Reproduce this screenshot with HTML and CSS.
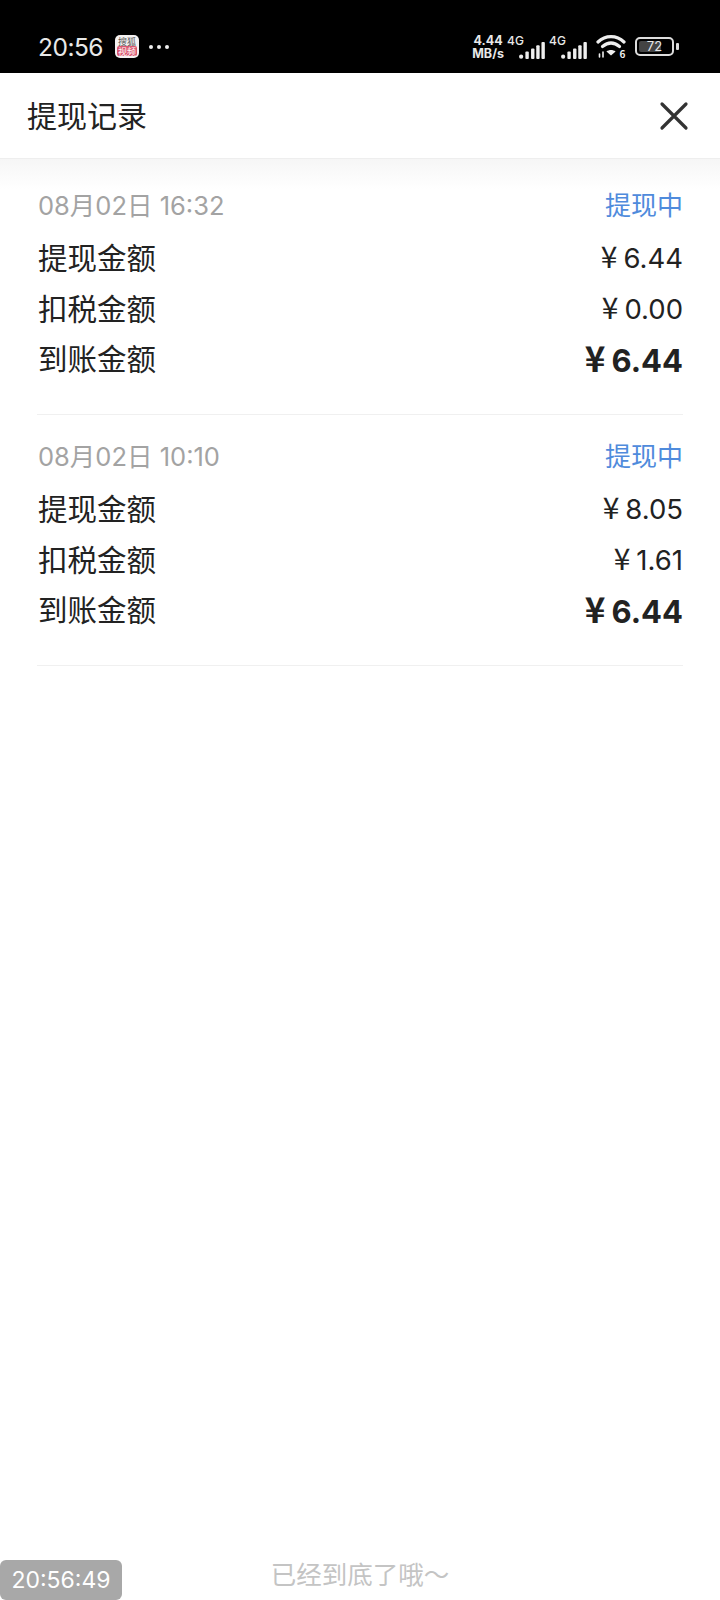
FILE: index.html
```html
<!DOCTYPE html>
<html lang="zh-CN">
<head>
    <meta charset="UTF-8">
    <meta name="viewport" content="width=device-width, initial-scale=1.0">
    <title>提现记录</title>
    <link rel="stylesheet" href="styles.css">
</head>
<body>

    <div class="page">
        <div class="status-bar">
            <div class="status-left">
                <span class="clock">20:56</span>
                <svg class="app-icon" width="24" height="23" viewBox="0 0 24 23">
                    <rect width="24" height="23" rx="5" fill="#f4f1f1"/>
                    <text x="12" y="9.5" font-size="9" text-anchor="middle" fill="#555" class="icon-text">搜狐</text>
                    <rect x="2" y="11" width="20" height="10" rx="2" fill="#d9566f"/>
                    <text x="12" y="19.5" font-size="9" text-anchor="middle" fill="#fff" class="icon-text">视频</text>
                </svg>
                <span class="more-dots"><i></i><i></i><i></i></span>
            </div>
            <div class="status-right">
                <div class="speed"><span>4.44</span><span>MB/s</span></div>
                <div class="signal">
                    <span class="net">4G</span>
                    <svg width="28" height="17" viewBox="0 0 28 18" fill="#eee">
                        <circle cx="2.5" cy="15.5" r="2.2"/>
                        <rect x="7" y="10" width="3.6" height="8" rx="1"/>
                        <rect x="13" y="7" width="3.6" height="11" rx="1"/>
                        <rect x="18.5" y="3.5" width="3.6" height="14.5" rx="1"/>
                        <rect x="24" y="0" width="3.6" height="18" rx="1"/>
                    </svg>
                </div>
                <div class="signal">
                    <span class="net">4G</span>
                    <svg width="28" height="17" viewBox="0 0 28 18" fill="#eee">
                        <circle cx="2.5" cy="15.5" r="2.2"/>
                        <rect x="7" y="10" width="3.6" height="8" rx="1"/>
                        <rect x="13" y="7" width="3.6" height="11" rx="1"/>
                        <rect x="18.5" y="3.5" width="3.6" height="14.5" rx="1"/>
                        <rect x="24" y="0" width="3.6" height="18" rx="1"/>
                    </svg>
                </div>
                <svg class="wifi" width="31" height="26" viewBox="0 0 31 26" fill="none" stroke="#eee" stroke-width="3.2" stroke-linecap="round">
                    <path d="M2 8C9.5 .8 20.5 .8 28 8"/>
                    <path d="M6.5 12.5C12 8 18 8 23.5 12.5"/>
                    <path d="M15 21.5l-4.6-4c2.8-2 6.4-2 9.2 0z" fill="#eee" stroke="none"/>
                    <path d="M3.5 20v3M7 18v5" stroke-width="1.6"/>
                    <text x="23.5" y="24" font-size="10" font-weight="700" fill="#eee" stroke="none" class="icon-text">6</text>
                </svg>
                <div class="battery">
                    <div class="battery-body">
                        <div class="battery-fill"></div>
                        <span class="battery-num">72</span>
                    </div>
                    <div class="battery-cap"></div>
                </div>
            </div>
        </div>

        <div class="header">
            <div class="header-title">提现记录</div>
            <svg class="close-icon" width="30" height="30" viewBox="0 0 30 30" fill="none" stroke="#333" stroke-width="3.2" stroke-linecap="round">
                <path d="M3 3L27 27M27 3L3 27"/>
            </svg>
        </div>
        <div class="header-fade"></div>

        <div class="record-list">
            <div class="record">
                <div class="record-top">
                    <span class="record-date">08月02日 16:32</span>
                    <span class="record-status">提现中</span>
                </div>
                <div class="record-row"><span>提现金额</span><span class="amount">¥<em>6.44</em></span></div>
                <div class="record-row"><span>扣税金额</span><span class="amount">¥<em>0.00</em></span></div>
                <div class="record-row"><span>到账金额</span><span class="amount total">¥<em>6.44</em></span></div>
            </div>
            <div class="record">
                <div class="record-top">
                    <span class="record-date">08月02日 10:10</span>
                    <span class="record-status">提现中</span>
                </div>
                <div class="record-row"><span>提现金额</span><span class="amount">¥<em>8.05</em></span></div>
                <div class="record-row"><span>扣税金额</span><span class="amount">¥<em>1.61</em></span></div>
                <div class="record-row"><span>到账金额</span><span class="amount total">¥<em>6.44</em></span></div>
            </div>
        </div>

        <div class="list-end">已经到底了哦～</div>
        <div class="time-badge">20:56:49</div>
    </div>

</body>
</html>
```

FILE: styles.css
```css
* {
    box-sizing: border-box;
}
body {
    margin: 0;
    font-family: Inter, "Noto Sans CJK SC", sans-serif;
    background-color: #fff;
}
.page {
    position: relative;
    display: flex;
    flex-direction: column;
    height: 1600px;
    overflow: hidden;
}
.icon-text {
    font-family: "Noto Sans CJK SC", sans-serif;
}

/* status bar */
.status-bar {
    display: flex;
    justify-content: space-between;
    align-items: center;
    height: 73px;
    padding: 20px 41px 0 38px;
    background-color: #000;
    color: #e8e8e8;
}
.status-left {
    display: flex;
    align-items: center;
}
.clock {
    font-size: 24.5px;
    letter-spacing: -0.5px;
}
.app-icon {
    margin-left: 12px;
}
.more-dots {
    display: flex;
    gap: 4px;
    margin-left: 10px;
}
.more-dots i {
    width: 4px;
    height: 4px;
    border-radius: 50%;
    background-color: #eee;
}
.status-right {
    display: flex;
    align-items: center;
}
.speed {
    display: flex;
    flex-direction: column;
    align-items: center;
    font-size: 12.5px;
    font-weight: 700;
    line-height: 13px;
}
.signal {
    position: relative;
    display: flex;
    align-items: flex-end;
    justify-content: flex-end;
    width: 42px;
    height: 25px;
}
.net {
    position: absolute;
    left: 3px;
    top: 0;
    font-size: 12px;
    font-weight: 500;
    line-height: 13px;
}
.wifi {
    margin-left: 8px;
}
.battery {
    display: flex;
    align-items: center;
    margin-left: 8px;
}
.battery-body {
    position: relative;
    width: 39px;
    height: 19px;
    border: 2px solid #ddd;
    border-radius: 5px;
    padding: 2px;
}
.battery-fill {
    width: 72%;
    height: 100%;
    border-radius: 2px;
    background-color: #444;
}
.battery-num {
    position: absolute;
    inset: 0;
    text-align: center;
    font-size: 13px;
    line-height: 15px;
}
.battery-cap {
    width: 3px;
    height: 7px;
    margin-left: 2px;
    border-radius: 1px;
    background-color: #ddd;
}

/* header */
.header {
    display: flex;
    justify-content: space-between;
    align-items: center;
    height: 86px;
    padding: 0 31px 0 27px;
    border-bottom: 1px solid #eee;
}
.header-title {
    font-size: 30px;
    color: #222;
    margin-top: -4px;
}
.header-fade {
    height: 30px;
    margin-bottom: -30px;
    background: linear-gradient(#f6f6f6, #fff);
}

/* records */
.record-list {
    padding: 5px 37px 0;
}
.record {
    height: 251px;
    padding-top: 17px;
    border-bottom: 1px solid #f0f0f0;
}
.record-top {
    display: flex;
    justify-content: space-between;
    align-items: center;
    height: 44px;
    margin-bottom: 6px;
    padding-left: 1px;
    font-size: 25.5px;
}
.record-date {
    color: #a3a3a3;
}
.record-status {
    color: #4f8bdc;
    font-size: 26px;
}
.record-row {
    display: flex;
    justify-content: space-between;
    align-items: center;
    height: 50.5px;
    padding-left: 1px;
    font-size: 29.5px;
    color: #222;
}
.amount {
    margin-top: -2px;
    font-family: "Noto Sans CJK SC", sans-serif;
    font-size: 30px;
}
.amount em {
    font-family: Inter, sans-serif;
    font-style: normal;
    font-size: 27.5px;
    margin-left: 6px;
}
.total {
    font-weight: 700;
    font-size: 35px;
}
.total em {
    font-size: 31px;
}

/* bottom */
.list-end {
    margin-top: auto;
    padding-bottom: 10px;
    text-align: center;
    font-size: 25.5px;
    line-height: 30px;
    color: #c4c4c4;
}
.time-badge {
    position: absolute;
    left: 0;
    bottom: 0;
    width: 122px;
    height: 40px;
    border-radius: 6px;
    background-color: #a8a8a8;
    color: #fff;
    font-size: 23px;
    line-height: 41px;
    text-align: center;
}
```
